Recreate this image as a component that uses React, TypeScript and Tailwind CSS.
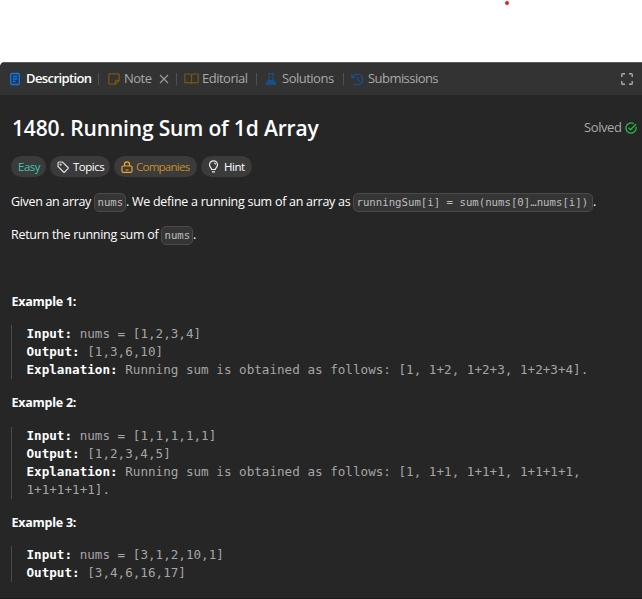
import type { ReactNode } from "react";

function Code({ children, w }: { children: ReactNode; w: string }) {
  return (
    <code className={`inline-block h-[19px] shrink-0 whitespace-nowrap rounded-[5px] border border-[#4a4a4a] bg-[#353535] pl-[2.5px] font-['DejaVu_Sans_Mono',monospace] text-[10.7px] leading-[17px] text-[#bdbdbd] ${w}`}>
      {children}
    </code>
  );
}

function Tab({ icon, label, className }: { icon: ReactNode; label: string; className: string }) {
  return (
    <div className="flex items-center">
      <span className="flex w-[17px] shrink-0 items-center">{icon}</span>
      <span className={`whitespace-nowrap ${className}`}>{label}</span>
    </div>
  );
}

function Divider({ className }: { className: string }) {
  return <div className={`h-3 w-px shrink-0 bg-[#505050] ${className}`} />;
}

function Line({ label, children }: { label?: string; children: ReactNode }) {
  return (
    <div className="whitespace-pre">
      {label && <b className="text-white">{label} </b>}
      {children}
    </div>
  );
}

function Example({ n, children, className, gap = "mt-[14px]" }: { n: number; children: ReactNode; className: string; gap?: string }) {
  return (
    <section className={className}>
      <h2 className="h-[18px] pl-[0.5px] text-[12.5px] font-bold leading-[18px] tracking-[-0.25px] text-white">Example {n}:</h2>
      <div className={`border-l border-[#4a4a4a] pl-[14.5px] font-['DejaVu_Sans_Mono',monospace] text-[12.61px] leading-[18px] text-[#a5a5a5] ${gap}`}>
        {children}
      </div>
    </section>
  );
}

export default function App() {
  return (
    <div className="flex h-[599px] w-[642px] flex-col overflow-hidden bg-white font-['Open_Sans','Noto_Sans',sans-serif]">
      <div className="h-[62px] shrink-0 pl-[505px] pt-px">
        <div className="size-1 rounded-full bg-[#ed1c24]" />
      </div>
      <main className="flex h-[537px] flex-col overflow-hidden rounded-tl-[5px] bg-[#262626]">
        <nav className="flex h-[33px] shrink-0 items-center border-t border-[#5c5c5c] bg-[#333333] pl-[9px] pr-[9px] text-[13px] text-[#a9a9a9]">
          <Tab
            label="Description"
            className="w-[65px] font-semibold tracking-[-0.6px] text-white"
            icon={
              <svg width="12" height="14" viewBox="0 0 12 14" fill="none" stroke="#007aff" strokeWidth="1.3">
                <rect x="1.7" y="1.5" width="8.6" height="11" rx="1.2" />
                <path d="M3.8 4.5h4.5M3.8 7h4.5M3.8 9.5h2.5" />
              </svg>
            }
          />
          <Divider className="ml-[7px] mr-[9px]" />
          <Tab
            label="Note"
            className="-ml-px w-[29px] tracking-[-0.5px]"
            icon={
              <svg width="12" height="12" viewBox="0 0 12 12" fill="none" stroke="#775711" strokeWidth="1.3">
                <path d="M2 .8h8c.7 0 1.2.5 1.2 1.2v5.5l-3.7 3.7H2c-.7 0-1.2-.5-1.2-1.2V2C.8 1.3 1.3.8 2 .8ZM7.3 11V8.3c0-.6.4-1 1-1H11" />
              </svg>
            }
          />
          <svg className="ml-[6px] shrink-0" width="10" height="10" viewBox="0 0 10 10" stroke="#999" strokeWidth="1.2">
            <path d="m1 1 8 8M9 1 1 9" />
          </svg>
          <Divider className="ml-[7px] mr-[7px]" />
          <Tab
            label="Editorial"
            className="ml-[1px] w-[46px] tracking-[-0.5px]"
            icon={
              <svg className="shrink-0" width="15" height="12" viewBox="0 0 15 12" fill="none" stroke="#775711" strokeWidth="1.2">
                <path d="M.8 1h4.5c1.2 0 2.2.8 2.2 2v8c0-.8-.8-1.3-1.8-1.3H.8V1ZM14.2 1H9.7C8.5 1 7.5 1.8 7.5 3v8c0-.8.8-1.3 1.8-1.3h4.9V1Z" />
              </svg>
            }
          />
          <Divider className="ml-[8px] mr-[8px]" />
          <Tab
            label="Solutions"
            className="w-[53px] tracking-[-0.5px]"
            icon={
              <svg width="12" height="14" viewBox="0 0 12 14" fill="none" stroke="#174f88" strokeWidth="1.2">
                <path d="M3 1.5h6M4.2 1.5v5L1.3 11.5c-.3.6 0 1 .6 1h8.2c.6 0 .9-.4.6-1L7.8 6.5v-5" />
                <path d="M3.2 8.5h5.6l1.8 3.5H1.4Z" fill="#174f88" />
              </svg>
            }
          />
          <Divider className="ml-[8px] mr-[7px]" />
          <Tab
            label="Submissions"
            className="w-[70px] tracking-[-0.55px]"
            icon={
              <svg width="13" height="13" viewBox="0 0 13 13" fill="none" stroke="#174f88" strokeWidth="1.3">
                <path d="M1.4 4.2A5.4 5.4 0 1 1 3 10.8M.8 1.3v3.2H4M6.8 3.5v3.3l2.3 1.3" />
              </svg>
            }
          />
          <svg className="ml-auto shrink-0" width="12" height="12" viewBox="0 0 12 12" fill="none" stroke="#aaaaaa" strokeWidth="1.4">
            <path d="M.8 4V1.6C.8 1.1 1.1.8 1.6.8H4M8 .8h2.4c.5 0 .8.3.8.8V4M11.2 8v2.4c0 .5-.3.8-.8.8H8M4 11.2H1.6c-.5 0-.8-.3-.8-.8V8" />
          </svg>
        </nav>

        <article className="flex flex-col pl-[11px] pr-[5px] pt-[17px] text-[12.5px] text-white">
          <header className="flex h-8 items-center justify-between">
            <h1 className="whitespace-nowrap pl-px text-[21px] font-semibold leading-8 tracking-[-0.16px]">1480. Running Sum of 1d Array</h1>
            <div className="flex items-center text-[13px] text-[#a9a9a9]">
              <span className="w-[41px] whitespace-nowrap tracking-[-0.4px]">Solved</span>
              <svg width="12" height="12" viewBox="0 0 12 12" fill="none" stroke="#28b84b" strokeWidth="1.3">
                <path d="M11 4.8A5.1 5.1 0 1 1 8.6 1.6M3.5 5.8l2 2 5.5-5.5" />
              </svg>
            </div>
          </header>

          <div className="mt-[12px] flex h-[21px] gap-1 text-[11.5px] tracking-[-0.5px]">
            <span className="flex w-[35px] items-center rounded-full bg-[#3b3b3b] pl-[7px] text-[#3bc5b5]">Easy</span>
            <span className="flex w-[60px] items-center gap-[4px] rounded-full bg-[#3b3b3b] pl-[7px]">
              <svg className="shrink-0" width="12" height="12" viewBox="0 0 12 12" fill="none" stroke="#ddd" strokeWidth="1.2">
                <path d="M1 2v3.5L6.500 11c.4.4.8.4 1.2 0L11 7.700c.4-.4.4-.8 0-1.200L5.500 1H2c-.6 0-1 .4-1 1Z" />
                <circle cx="3.6" cy="3.6" r=".5" />
              </svg>
              Topics
            </span>
            <span className="flex w-[83px] items-center gap-[3px] rounded-full bg-[#3b3b3b] pl-[7px] tracking-[-0.75px] text-[#c68e28]">
              <svg className="shrink-0" width="12" height="12" viewBox="0 0 12 12" fill="none" stroke="#f0a928" strokeWidth="1.2">
                <rect x="1" y="5" width="10" height="6.3" rx="1.2" />
                <path d="M3.500 5V3.300c0-3.300 5-3.300 5 0V5M4.500 9h3" />
              </svg>
              Companies
            </span>
            <span className="flex w-[51px] items-center gap-[5px] rounded-full bg-[#3b3b3b] pl-[7px]">
              <svg className="shrink-0" width="11" height="13" viewBox="0 0 11 13" fill="none" stroke="#eee" strokeWidth="1.2">
                <path d="M3.700 9.500C3.700 8 1.500 7.500 1.500 4.800a4 4 0 0 1 8 0C9.500 7.500 7.300 8 7.300 9.500ZM4 11.800h3M6 3c1 .1 1.500.7 1.600 1.500" />
              </svg>
              Hint
            </span>
          </div>

          <p className="mt-[16px] flex h-[19px] items-center whitespace-nowrap">
            <span className="w-[83px] tracking-[-0.33px]">Given an array</span>
            <Code w="w-[32px]">nums</Code>
            <span className="w-[227px] tracking-[-0.27px]">. We define a running sum of an array as</span>
            <Code w="w-[240px]">runningSum[i] = sum(nums[0]…nums[i])</Code>.
          </p>
          <p className="mt-[14px] flex h-[19px] items-center whitespace-nowrap">
            <span className="w-[150px] tracking-[-0.28px]">Return the running sum of</span>
            <Code w="w-[32px]">nums</Code>.
          </p>

          <Example n={1} className="mt-[48px]">
            <Line label="Input:">nums = [1,2,3,4]</Line>
            <Line label="Output:">[1,3,6,10]</Line>
            <Line label="Explanation:">Running sum is obtained as follows: [1, 1+2, 1+2+3, 1+2+3+4].</Line>
          </Example>
          <Example n={2} className="mt-[15px]" gap="mt-[15px]">
            <Line label="Input:">nums = [1,1,1,1,1]</Line>
            <Line label="Output:">[1,2,3,4,5]</Line>
            <Line label="Explanation:">Running sum is obtained as follows: [1, 1+1, 1+1+1, 1+1+1+1,</Line>
            <Line>1+1+1+1+1].</Line>
          </Example>
          <Example n={3} className="mt-[15px]">
            <Line label="Input:">nums = [3,1,2,10,1]</Line>
            <Line label="Output:">[3,4,6,16,17]</Line>
          </Example>
        </article>
        <footer className="mt-auto h-px bg-[#1c1c1c]" />
      </main>
    </div>
  );
}
